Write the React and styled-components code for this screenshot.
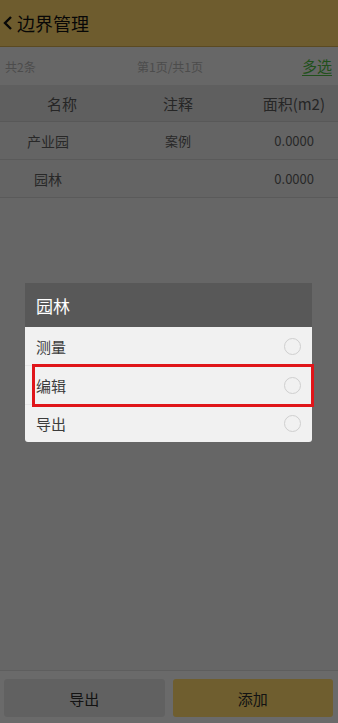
import React from "react";
import styled, { createGlobalStyle } from "styled-components";

const GlobalStyle = createGlobalStyle`
  html, body {
    margin: 0;
    padding: 0;
    background: #e3e3e3;
    font-family: "Noto Sans CJK SC", "Noto Sans", Roboto, sans-serif;
  }
  * { box-sizing: border-box; }
`;

const boundaries = [
  { name: "产业园", note: "案例", area: "0.0000" },
  { name: "园林", note: "", area: "0.0000" },
];

const actions = ["测量", "编辑", "导出"];

function App() {
  return (
    <>
      <GlobalStyle />
      <Page>
        <Header>
          <Back viewBox="0 0 12 16">
            <path d="M9 2 L3 8 L9 14" />
          </Back>
          <Title>边界管理</Title>
        </Header>
        <InfoBar>
          <Count>共2条</Count>
          <Pager>第1页/共1页</Pager>
          <MultiSelect>多选</MultiSelect>
        </InfoBar>
        <HeadRow>
          <HeadCell>名称</HeadCell>
          <HeadCell>注释</HeadCell>
          <HeadCell>面积(m2)</HeadCell>
        </HeadRow>
        {boundaries.map((b) => (
          <Row key={b.name}>
            <NameCell>{b.name}</NameCell>
            <NoteCell>{b.note}</NoteCell>
            <AreaCell>{b.area}</AreaCell>
          </Row>
        ))}
        <Spacer />
        <BottomBar>
          <Button>导出</Button>
          <Button primary>添加</Button>
        </BottomBar>
      </Page>

      <Overlay>
        <Dialog>
          <DialogTitle>园林</DialogTitle>
          {actions.map((a) => (
            <Option key={a} marked={a === "编辑"}>
              <span>{a}</span>
              <Radio />
            </Option>
          ))}
        </Dialog>
      </Overlay>
    </>
  );
}

export default App;

const Page = styled.div`
  width: 338px;
  height: 723px;
  display: flex;
  flex-direction: column;
  background: #e3e3e3;
`;

const Header = styled.div`
  height: 47px;
  background: #f3cc66;
  border-bottom: 1px solid #c9a44c;
  display: flex;
  align-items: center;
  padding-left: 2px;
`;

const Back = styled.svg`
  width: 12px;
  height: 16px;
  fill: none;
  stroke: #111;
  stroke-width: 2.4;
  margin-right: 3px;
`;

const Title = styled.div`
  font-size: 18px;
  color: #111;
`;

const InfoBar = styled.div`
  height: 38px;
  background: #e4e4e4;
  display: flex;
  align-items: center;
  padding: 0 6px 0 5px;
  font-size: 12px;
  color: #a8a8a8;
`;

const Count = styled.div`
  width: 132px;
`;

const Pager = styled.div`
  flex: 1;
`;

const MultiSelect = styled.div`
  font-size: 15px;
  color: #49b23e;
  border-bottom: 1px solid #49b23e;
  line-height: 18px;
`;

const HeadRow = styled.div`
  height: 37px;
  background: #d2d2d2;
  display: grid;
  grid-template-columns: 124px 108px 1fr;
  align-items: center;
  border-bottom: 1px solid #c4c4c4;
`;

const HeadCell = styled.div`
  text-align: center;
  font-size: 15px;
  color: #555;
  &:last-child {
    text-align: right;
    padding-right: 13px;
  }
`;

const Row = styled.div`
  height: 38px;
  display: grid;
  grid-template-columns: 96px 164px 1fr;
  align-items: center;
  border-bottom: 1px solid #c8c8c8;
  background: #dedede;
`;

const NameCell = styled.div`
  text-align: center;
  font-size: 14px;
  color: #5a5a5a;
`;

const NoteCell = styled.div`
  text-align: center;
  font-size: 13px;
  color: #5a5a5a;
`;

const AreaCell = styled.div`
  text-align: right;
  padding-right: 24px;
  font-size: 13px;
  color: #5a5a5a;
`;

const Spacer = styled.div`
  flex: 1;
`;

const BottomBar = styled.div`
  height: 53px;
  border-top: 1px solid #d0d0d0;
  background: #ececec;
  display: flex;
  gap: 8px;
  padding: 8px 5px 6px 4px;
`;

const Button = styled.div`
  flex: 1;
  border-radius: 3px;
  background: ${(p) => (p.primary ? "#f5d068" : "#d8d8d8")};
  display: flex;
  align-items: center;
  justify-content: center;
  font-size: 15px;
  color: #2a2a2a;
`;

const Overlay = styled.div`
  position: fixed;
  inset: 0;
  background: rgba(0, 0, 0, 0.55);
  display: flex;
  align-items: center;
  justify-content: center;
`;

const Dialog = styled.div`
  width: 287px;
  background: #f1f1f1;
  border-radius: 3px;
  margin-right: 1px;
  margin-top: 2px;
`;

const DialogTitle = styled.div`
  height: 44px;
  background: #585858;
  color: #fff;
  font-size: 17px;
  display: flex;
  align-items: center;
  padding-left: 11px;
`;

const Option = styled.div`
  position: relative;
  height: 39px;
  display: flex;
  align-items: center;
  justify-content: space-between;
  padding: 0 11px;
  font-size: 15px;
  color: #3c3c3c;
  border-bottom: 1px solid #e6e6e6;
  &:last-child {
    border-bottom: none;
    height: 37px;
  }
  &::after {
    content: "";
    display: ${(p) => (p.marked ? "block" : "none")};
    position: absolute;
    left: 7px;
    right: -2px;
    top: -2px;
    bottom: -3px;
    border: 3px solid #e0151a;
  }
`;

const Radio = styled.div`
  width: 17px;
  height: 17px;
  border-radius: 50%;
  border: 1px solid #cfcfcf;
`;
